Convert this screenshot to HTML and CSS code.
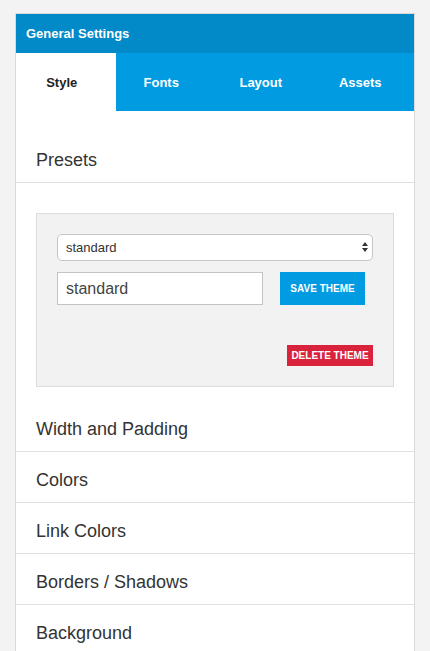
FILE: index.html
```html
<!DOCTYPE html>
<html>
<head>
<meta charset="utf-8">
<link rel="stylesheet" href="styles.css">
</head>
<body>
<div class="panel">
  <div class="panel-header">General Settings</div>
  <div class="tabs">
    <div class="tab active">Style</div>
    <div class="tab">Fonts</div>
    <div class="tab">Layout</div>
    <div class="tab">Assets</div>
  </div>
  <div class="tab-content">
    <div class="section-title">Presets</div>
    <div class="presets-body">
      <div class="preset-box">
        <div class="select-wrap">
          <select class="preset-select">
            <option>standard</option>
          </select>
          <svg class="select-arrows" width="6" height="10" viewBox="0 0 6 10">
            <path d="M3 0 L6 4 L0 4 Z" fill="#333"/>
            <path d="M0 6 L6 6 L3 10 Z" fill="#333"/>
          </svg>
        </div>
        <div class="save-row">
          <input class="theme-name" type="text" value="standard">
          <button class="btn btn-save">SAVE THEME</button>
        </div>
        <div class="delete-row">
          <button class="btn btn-delete">DELETE THEME</button>
        </div>
      </div>
    </div>
    <div class="section-title">Width and Padding</div>
    <div class="section-title">Colors</div>
    <div class="section-title">Link Colors</div>
    <div class="section-title">Borders / Shadows</div>
    <div class="section-title">Background</div>
  </div>
</div>
</body>
</html>
```

FILE: styles.css
```css
html, body {
  margin: 0;
  padding: 0;
}
body {
  background: #f3f3f3;
  padding: 13px 15px 0;
  font-family: "Liberation Sans", Arial, sans-serif;
  color: #333;
  height: 651px;
  box-sizing: border-box;
  overflow: hidden;
}
.panel {
  width: 400px;
  box-sizing: border-box;
  background: #fff;
  border: 1px solid #dadada;
  border-bottom: none;
}
.panel-header {
  height: 39px;
  background: #0189c8;
  color: #fff;
  font-weight: bold;
  font-size: 13px;
  display: flex;
  align-items: center;
  padding-left: 10px;
}
.tabs {
  display: flex;
  height: 58px;
  background: #009be1;
}
.tab {
  flex: 1;
  display: flex;
  align-items: center;
  justify-content: center;
  padding-right: 8px;
  color: #fff;
  font-weight: bold;
  font-size: 13px;
}
.tab.active {
  background: #fff;
  color: #222;
}
.tab-content {
  padding-top: 21px;
}
.section-title {
  font-size: 18px;
  line-height: 22px;
  padding: 17px 20px 11px;
  border-bottom: 1px solid #e0e0e0;
  color: #333;
}
.section-title:last-child {
  border-bottom: none;
}
.presets-body {
  padding: 30px 20px 14px;
}
.preset-box {
  background: #f2f2f2;
  border: 1px solid #dcdcdc;
  padding: 20px;
}
.select-wrap {
  position: relative;
  height: 27px;
}
.preset-select {
  appearance: none;
  -webkit-appearance: none;
  width: 100%;
  height: 27px;
  box-sizing: border-box;
  border: 1px solid #c6c6c6;
  border-radius: 5px;
  background: #fff;
  font-family: "Liberation Sans", Arial, sans-serif;
  font-size: 13px;
  color: #333;
  padding: 0 8px;
  margin: 0;
}
.select-arrows {
  position: absolute;
  right: 5px;
  top: 8px;
}
.save-row {
  display: flex;
  align-items: flex-start;
  margin-top: 11px;
  gap: 17px;
}
.theme-name {
  width: 206px;
  height: 33px;
  box-sizing: border-box;
  border: 1px solid #c4c4c4;
  background: #fff;
  font-family: "Liberation Sans", Arial, sans-serif;
  font-size: 16px;
  color: #444;
  padding: 0 8px;
  margin: 0;
  border-radius: 0;
}
.btn {
  border: none;
  margin: 0;
  padding: 0;
  color: #fff;
  font-family: "Liberation Sans", Arial, sans-serif;
  font-weight: bold;
  font-size: 10px;
  cursor: pointer;
}
.btn-save {
  width: 85px;
  height: 33px;
  background: #009be1;
}
.delete-row {
  display: flex;
  justify-content: flex-end;
  margin-top: 40px;
}
.btn-delete {
  width: 86px;
  height: 21px;
  background: #d9223b;
}
```
